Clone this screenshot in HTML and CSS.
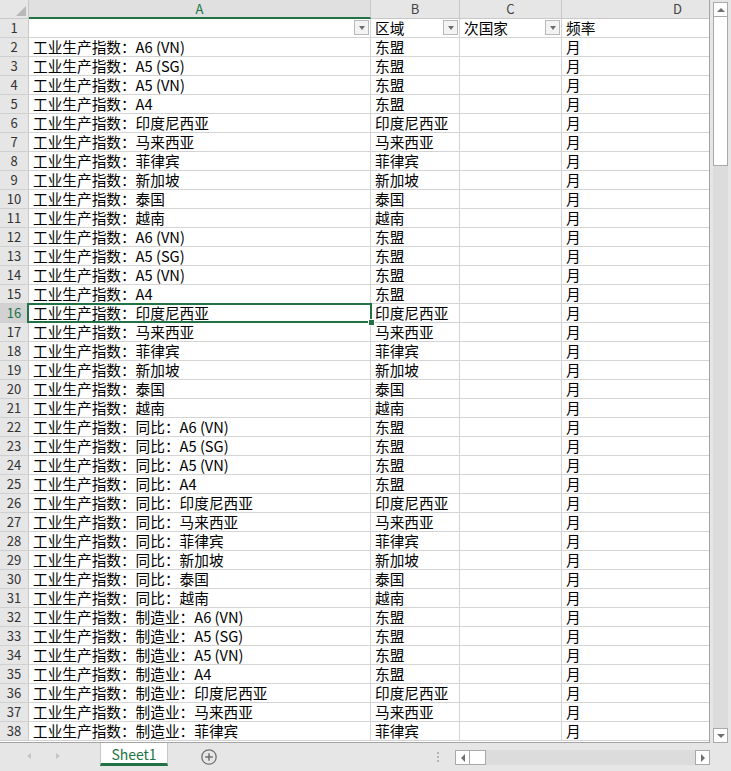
FILE: index.html
```html
<!DOCTYPE html>
<html lang="zh-CN">
<head>
<meta charset="utf-8">
<title>Sheet1</title>
<link rel="stylesheet" href="styles.css">
</head>
<body>
<div class="main">
  <div class="sheet">
    <div class="grid">
      <div class="corner"><span class="tri"></span></div>
      <div class="colh active">A</div>
      <div class="colh">B</div>
      <div class="colh">C</div>
      <div class="colh">D</div>

      <div class="rowh">1</div>
      <div class="cell filt"><span></span><span class="fbtn"></span></div>
      <div class="cell filt"><span>区域</span><span class="fbtn"></span></div>
      <div class="cell filt"><span>次国家</span><span class="fbtn"></span></div>
      <div class="cell filt"><span>频率</span><span class="fbtn"></span></div>

      <div class="rowh">2</div><div class="cell">工业生产指数：A6 (VN)</div><div class="cell">东盟</div><div class="cell"></div><div class="cell">月</div>
      <div class="rowh">3</div><div class="cell">工业生产指数：A5 (SG)</div><div class="cell">东盟</div><div class="cell"></div><div class="cell">月</div>
      <div class="rowh">4</div><div class="cell">工业生产指数：A5 (VN)</div><div class="cell">东盟</div><div class="cell"></div><div class="cell">月</div>
      <div class="rowh">5</div><div class="cell">工业生产指数：A4</div><div class="cell">东盟</div><div class="cell"></div><div class="cell">月</div>
      <div class="rowh">6</div><div class="cell">工业生产指数：印度尼西亚</div><div class="cell">印度尼西亚</div><div class="cell"></div><div class="cell">月</div>
      <div class="rowh">7</div><div class="cell">工业生产指数：马来西亚</div><div class="cell">马来西亚</div><div class="cell"></div><div class="cell">月</div>
      <div class="rowh">8</div><div class="cell">工业生产指数：菲律宾</div><div class="cell">菲律宾</div><div class="cell"></div><div class="cell">月</div>
      <div class="rowh">9</div><div class="cell">工业生产指数：新加坡</div><div class="cell">新加坡</div><div class="cell"></div><div class="cell">月</div>
      <div class="rowh">10</div><div class="cell">工业生产指数：泰国</div><div class="cell">泰国</div><div class="cell"></div><div class="cell">月</div>
      <div class="rowh">11</div><div class="cell">工业生产指数：越南</div><div class="cell">越南</div><div class="cell"></div><div class="cell">月</div>
      <div class="rowh">12</div><div class="cell">工业生产指数：A6 (VN)</div><div class="cell">东盟</div><div class="cell"></div><div class="cell">月</div>
      <div class="rowh">13</div><div class="cell">工业生产指数：A5 (SG)</div><div class="cell">东盟</div><div class="cell"></div><div class="cell">月</div>
      <div class="rowh">14</div><div class="cell">工业生产指数：A5 (VN)</div><div class="cell">东盟</div><div class="cell"></div><div class="cell">月</div>
      <div class="rowh">15</div><div class="cell">工业生产指数：A4</div><div class="cell">东盟</div><div class="cell"></div><div class="cell">月</div>
      <div class="rowh active">16</div><div class="cell">工业生产指数：印度尼西亚</div><div class="cell">印度尼西亚</div><div class="cell"></div><div class="cell">月</div>
      <div class="rowh">17</div><div class="cell">工业生产指数：马来西亚</div><div class="cell">马来西亚</div><div class="cell"></div><div class="cell">月</div>
      <div class="rowh">18</div><div class="cell">工业生产指数：菲律宾</div><div class="cell">菲律宾</div><div class="cell"></div><div class="cell">月</div>
      <div class="rowh">19</div><div class="cell">工业生产指数：新加坡</div><div class="cell">新加坡</div><div class="cell"></div><div class="cell">月</div>
      <div class="rowh">20</div><div class="cell">工业生产指数：泰国</div><div class="cell">泰国</div><div class="cell"></div><div class="cell">月</div>
      <div class="rowh">21</div><div class="cell">工业生产指数：越南</div><div class="cell">越南</div><div class="cell"></div><div class="cell">月</div>
      <div class="rowh">22</div><div class="cell">工业生产指数：同比：A6 (VN)</div><div class="cell">东盟</div><div class="cell"></div><div class="cell">月</div>
      <div class="rowh">23</div><div class="cell">工业生产指数：同比：A5 (SG)</div><div class="cell">东盟</div><div class="cell"></div><div class="cell">月</div>
      <div class="rowh">24</div><div class="cell">工业生产指数：同比：A5 (VN)</div><div class="cell">东盟</div><div class="cell"></div><div class="cell">月</div>
      <div class="rowh">25</div><div class="cell">工业生产指数：同比：A4</div><div class="cell">东盟</div><div class="cell"></div><div class="cell">月</div>
      <div class="rowh">26</div><div class="cell">工业生产指数：同比：印度尼西亚</div><div class="cell">印度尼西亚</div><div class="cell"></div><div class="cell">月</div>
      <div class="rowh">27</div><div class="cell">工业生产指数：同比：马来西亚</div><div class="cell">马来西亚</div><div class="cell"></div><div class="cell">月</div>
      <div class="rowh">28</div><div class="cell">工业生产指数：同比：菲律宾</div><div class="cell">菲律宾</div><div class="cell"></div><div class="cell">月</div>
      <div class="rowh">29</div><div class="cell">工业生产指数：同比：新加坡</div><div class="cell">新加坡</div><div class="cell"></div><div class="cell">月</div>
      <div class="rowh">30</div><div class="cell">工业生产指数：同比：泰国</div><div class="cell">泰国</div><div class="cell"></div><div class="cell">月</div>
      <div class="rowh">31</div><div class="cell">工业生产指数：同比：越南</div><div class="cell">越南</div><div class="cell"></div><div class="cell">月</div>
      <div class="rowh">32</div><div class="cell">工业生产指数：制造业：A6 (VN)</div><div class="cell">东盟</div><div class="cell"></div><div class="cell">月</div>
      <div class="rowh">33</div><div class="cell">工业生产指数：制造业：A5 (SG)</div><div class="cell">东盟</div><div class="cell"></div><div class="cell">月</div>
      <div class="rowh">34</div><div class="cell">工业生产指数：制造业：A5 (VN)</div><div class="cell">东盟</div><div class="cell"></div><div class="cell">月</div>
      <div class="rowh">35</div><div class="cell">工业生产指数：制造业：A4</div><div class="cell">东盟</div><div class="cell"></div><div class="cell">月</div>
      <div class="rowh">36</div><div class="cell">工业生产指数：制造业：印度尼西亚</div><div class="cell">印度尼西亚</div><div class="cell"></div><div class="cell">月</div>
      <div class="rowh">37</div><div class="cell">工业生产指数：制造业：马来西亚</div><div class="cell">马来西亚</div><div class="cell"></div><div class="cell">月</div>
      <div class="rowh">38</div><div class="cell">工业生产指数：制造业：菲律宾</div><div class="cell">菲律宾</div><div class="cell"></div><div class="cell">月</div>
    </div>
    <div class="selection"><span class="handle"></span></div>
  </div>
  <div class="vscroll">
    <div class="sbtn up"></div>
    <div class="vthumb"></div>
    <div class="vtrack"></div>
    <div class="sbtn down"></div>
  </div>
</div>
<div class="tabbar">
  <div class="nav"><span class="nav-left"></span><span class="nav-right"></span></div>
  <div class="tab">Sheet1</div>
  <div class="addsheet">
    <svg width="16" height="16" viewBox="0 0 16 16"><circle cx="8" cy="8" r="7.2" fill="none" stroke="#6f6f6f" stroke-width="1.3"/><path d="M8 4.2v7.6M4.2 8h7.6" stroke="#6f6f6f" stroke-width="1.5"/></svg>
  </div>
  <div class="splitter"><span></span><span></span><span></span></div>
  <div class="hscroll">
    <div class="sbtn left"></div>
    <div class="hthumb"></div>
    <div class="htrack"></div>
    <div class="sbtn right"></div>
  </div>
</div>
</body>
</html>
```

FILE: styles.css
```css
* { box-sizing: border-box; }
html, body { margin: 0; padding: 0; }
body {
  width: 731px;
  height: 771px;
  overflow: hidden;
  background: #e6e6e6;
  font-family: "Noto Sans CJK SC", "Noto Sans", sans-serif;
}

.main {
  display: flex;
  align-items: flex-start;
  height: 743px;
}

.sheet {
  position: relative;
  width: 710px;
  height: 743px;
  overflow: hidden;
  background: #fff;
  border-right: 1px solid #a3a3a3;
  border-bottom: 1px solid #a3a3a3;
}

.grid {
  display: grid;
  grid-template-columns: 29px 342px 89px 102px 232px;
  grid-auto-rows: 19px;
  width: max-content;
}

.corner {
  background: #e6e6e6;
  border-right: 1px solid #c8c8c8;
  border-bottom: 1px solid #c8c8c8;
  display: flex;
  justify-content: flex-end;
  align-items: flex-end;
  padding: 0 2px 2px 0;
}
.tri {
  width: 0;
  height: 0;
  border-left: 10px solid transparent;
  border-bottom: 10px solid #b8b8b8;
}

.colh {
  background: #e6e6e6;
  border-right: 1px solid #c8c8c8;
  border-bottom: 1px solid #c8c8c8;
  text-align: center;
  font-size: 13px;
  line-height: 18px;
  color: #444;
}
.colh.active {
  background: #e0e0e0;
  color: #217346;
  border-bottom: 2px solid #217346;
  line-height: 17px;
}

.rowh {
  background: #e6e6e6;
  border-right: 1px solid #c8c8c8;
  border-bottom: 1px solid #d0d0d0;
  text-align: center;
  font-size: 13px;
  line-height: 18px;
  color: #333;
}
.rowh.active {
  background: #d2d2d2;
  color: #217346;
}

.cell {
  border-right: 1px solid #d4d4d4;
  border-bottom: 1px solid #d4d4d4;
  padding: 0 2px 0 4px;
  font-size: 14.67px;
  line-height: 18px;
  color: #000;
  white-space: nowrap;
}
.cell.filt {
  display: flex;
  justify-content: space-between;
  align-items: flex-start;
  padding-right: 1px;
}
.fbtn {
  flex: none;
  width: 15px;
  height: 15px;
  margin-top: 1px;
  border: 1px solid #b9b9b9;
  background: #f3f3f3;
  display: flex;
  align-items: center;
  justify-content: center;
}
.fbtn::after {
  content: "";
  border-left: 3.5px solid transparent;
  border-right: 3.5px solid transparent;
  border-top: 4px solid #6e6e6e;
}

.selection {
  position: absolute;
  left: 27px;
  top: 303px;
  width: 345px;
  height: 20px;
  border: 2px solid #217346;
}
.handle {
  position: absolute;
  right: -5px;
  bottom: -5px;
  width: 7px;
  height: 7px;
  background: #217346;
  border: 1px solid #fff;
}

/* vertical scrollbar */
.vscroll {
  margin: 2px 0 0 3px;
  width: 15px;
  height: 741px;
  background: #dcdcdc;
  display: flex;
  flex-direction: column;
}
.sbtn {
  flex: none;
  width: 15px;
  height: 15px;
  background: #fff;
  border: 1px solid #a9a9a9;
  display: flex;
  align-items: center;
  justify-content: center;
}
.sbtn.up::after {
  content: "";
  border-left: 4px solid transparent;
  border-right: 4px solid transparent;
  border-bottom: 4px solid #707070;
}
.sbtn.down::after {
  content: "";
  border-left: 4px solid transparent;
  border-right: 4px solid transparent;
  border-top: 4px solid #707070;
}
.sbtn.left::after {
  content: "";
  border-top: 4px solid transparent;
  border-bottom: 4px solid transparent;
  border-right: 4px solid #707070;
}
.sbtn.right::after {
  content: "";
  border-top: 4px solid transparent;
  border-bottom: 4px solid transparent;
  border-left: 4px solid #707070;
}
.vthumb {
  flex: none;
  height: 149px;
  background: #fff;
  border: 1px solid #a9a9a9;
  border-top: none;
}
.vtrack { flex: 1; }

/* sheet tabs bar */
.tabbar {
  height: 28px;
  display: flex;
  align-items: flex-start;
}
.nav {
  flex: none;
  width: 100px;
  display: flex;
  align-items: center;
  gap: 25px;
  padding: 10px 0 0 27px;
}
.nav-left {
  border-top: 3.5px solid transparent;
  border-bottom: 3.5px solid transparent;
  border-right: 4px solid #c4c4c4;
}
.nav-right {
  border-top: 3.5px solid transparent;
  border-bottom: 3.5px solid transparent;
  border-left: 4px solid #c4c4c4;
}
.tab {
  flex: none;
  width: 68px;
  height: 23px;
  background: #fff;
  border-left: 1px solid #c8c8c8;
  border-right: 1px solid #c8c8c8;
  border-bottom: 3px solid #217346;
  padding-top: 2px;
  display: flex;
  align-items: center;
  justify-content: center;
  color: #217346;
  font-size: 14px;
  line-height: 18px;
}
.addsheet {
  flex: none;
  width: 16px;
  height: 16px;
  margin: 6px 0 0 33px;
}
.addsheet svg { display: block; }
.splitter {
  flex: none;
  margin: 9px 0 0 220px;
  display: flex;
  flex-direction: column;
  gap: 2px;
}
.splitter span {
  width: 2px;
  height: 2px;
  background: #b4b4b4;
}
.hscroll {
  flex: none;
  margin: 7px 0 0 16px;
  width: 255px;
  height: 15px;
  background: #dcdcdc;
  display: flex;
}
.hthumb {
  flex: none;
  width: 16px;
  height: 15px;
  background: #fff;
  border: 1px solid #a9a9a9;
  border-left: none;
}
.htrack { flex: 1; }
```
